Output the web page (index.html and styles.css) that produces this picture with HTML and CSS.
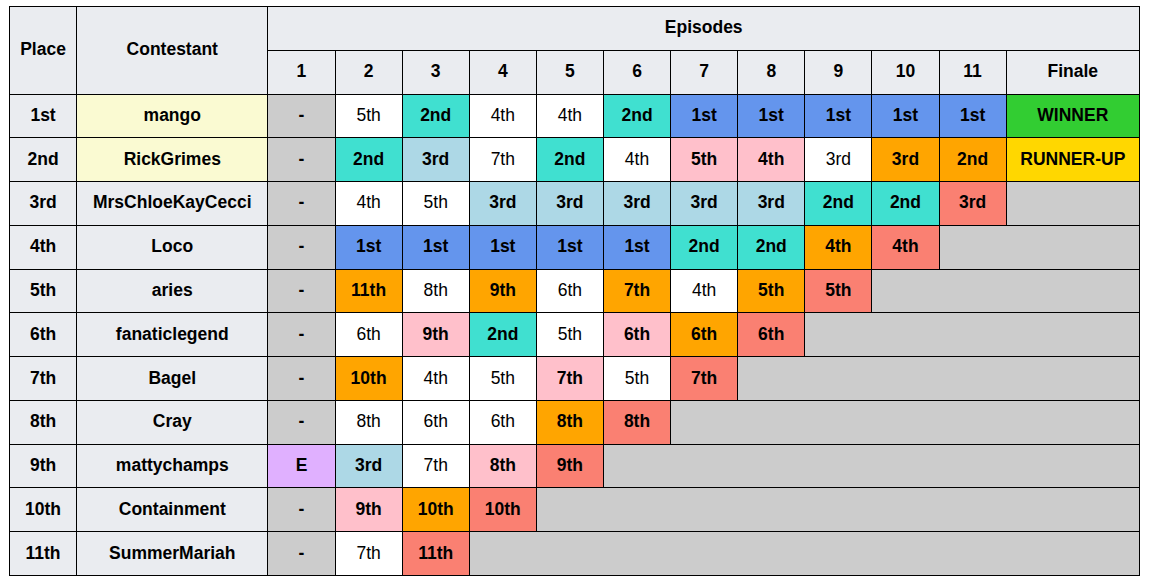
FILE: index.html
```html
<!DOCTYPE html>
<html>
<head>
<meta charset="utf-8">
<link rel="stylesheet" href="styles.css">
</head>
<body>
<table class="results">
<colgroup>
<col class="c-place"><col class="c-name">
<col class="c-ep"><col class="c-ep"><col class="c-ep"><col class="c-ep"><col class="c-ep"><col class="c-ep"><col class="c-ep"><col class="c-ep"><col class="c-ep"><col class="c-ep"><col class="c-ep">
<col class="c-fin">
</colgroup>
<thead>
<tr><th rowspan="2">Place</th><th rowspan="2">Contestant</th><th colspan="12">Episodes</th></tr>
<tr><th>1</th><th>2</th><th>3</th><th>4</th><th>5</th><th>6</th><th>7</th><th>8</th><th>9</th><th>10</th><th>11</th><th>Finale</th></tr>
</thead>
<tbody>
<tr><th>1st</th><td class="yl">mango</td><td class="gr">-</td><td class="wh">5th</td><td class="tq">2nd</td><td class="wh">4th</td><td class="wh">4th</td><td class="tq">2nd</td><td class="bl">1st</td><td class="bl">1st</td><td class="bl">1st</td><td class="bl">1st</td><td class="bl">1st</td><td class="win">WINNER</td></tr>
<tr><th>2nd</th><td class="yl">RickGrimes</td><td class="gr">-</td><td class="tq">2nd</td><td class="lb">3rd</td><td class="wh">7th</td><td class="tq">2nd</td><td class="wh">4th</td><td class="pk">5th</td><td class="pk">4th</td><td class="wh">3rd</td><td class="or">3rd</td><td class="or">2nd</td><td class="run">RUNNER-UP</td></tr>
<tr><th>3rd</th><th>MrsChloeKayCecci</th><td class="gr">-</td><td class="wh">4th</td><td class="wh">5th</td><td class="lb">3rd</td><td class="lb">3rd</td><td class="lb">3rd</td><td class="lb">3rd</td><td class="lb">3rd</td><td class="tq">2nd</td><td class="tq">2nd</td><td class="sa">3rd</td><td class="gr"></td></tr>
<tr><th>4th</th><th>Loco</th><td class="gr">-</td><td class="bl">1st</td><td class="bl">1st</td><td class="bl">1st</td><td class="bl">1st</td><td class="bl">1st</td><td class="tq">2nd</td><td class="tq">2nd</td><td class="or">4th</td><td class="sa">4th</td><td class="gr" colspan="2"></td></tr>
<tr><th>5th</th><th>aries</th><td class="gr">-</td><td class="or">11th</td><td class="wh">8th</td><td class="or">9th</td><td class="wh">6th</td><td class="or">7th</td><td class="wh">4th</td><td class="or">5th</td><td class="sa">5th</td><td class="gr" colspan="3"></td></tr>
<tr><th>6th</th><th>fanaticlegend</th><td class="gr">-</td><td class="wh">6th</td><td class="pk">9th</td><td class="tq">2nd</td><td class="wh">5th</td><td class="pk">6th</td><td class="or">6th</td><td class="sa">6th</td><td class="gr" colspan="4"></td></tr>
<tr><th>7th</th><th>Bagel</th><td class="gr">-</td><td class="or">10th</td><td class="wh">4th</td><td class="wh">5th</td><td class="pk">7th</td><td class="wh">5th</td><td class="sa">7th</td><td class="gr" colspan="5"></td></tr>
<tr><th>8th</th><th>Cray</th><td class="gr">-</td><td class="wh">8th</td><td class="wh">6th</td><td class="wh">6th</td><td class="or">8th</td><td class="sa">8th</td><td class="gr" colspan="6"></td></tr>
<tr><th>9th</th><th>mattychamps</th><td class="lv">E</td><td class="lb">3rd</td><td class="wh">7th</td><td class="pk">8th</td><td class="sa">9th</td><td class="gr" colspan="7"></td></tr>
<tr><th>10th</th><th>Containment</th><td class="gr">-</td><td class="pk">9th</td><td class="or">10th</td><td class="sa">10th</td><td class="gr" colspan="8"></td></tr>
<tr><th>11th</th><th>SummerMariah</th><td class="gr">-</td><td class="wh">7th</td><td class="sa">11th</td><td class="gr" colspan="9"></td></tr>
</tbody>
</table>
</body>
</html>
```

FILE: styles.css
```css
html, body {
  margin: 0;
  padding: 0;
  background: #ffffff;
}
body {
  padding: 6px 0 0 9px;
  font-family: "Liberation Sans", Arial, sans-serif;
  font-size: 17.5px;
  color: #000;
}
.results {
  border-collapse: collapse;
  table-layout: fixed;
  width: 1131px;
  border: 1px solid #000;
}
.c-place { width: 67px; }
.c-name { width: 191px; }
.c-ep { width: 67px; }
.c-fin { width: 133px; }
.results th,
.results td {
  border: 1px solid #000;
  height: 43.77px;
  padding: 0 0 2px 0;
  text-align: center;
  vertical-align: middle;
  font-weight: bold;
  line-height: 20px;
  box-sizing: border-box;
}
.results th {
  background: #eaecf0;
}
.results tr { height: 43.77px; }
.results td.wh { background: #ffffff; font-weight: normal; }
.yl { background: #fafad2; }
.gr { background: #cccccc; }
.tq { background: #40e0d0; }
.bl { background: #6495ed; }
.lb { background: #add8e6; }
.pk { background: #ffc0cb; }
.or { background: #ffa500; }
.sa { background: #fa8072; }
.lv { background: #e0b0ff; }
.win { background: #32cd32; }
.run { background: #ffd700; }
```
